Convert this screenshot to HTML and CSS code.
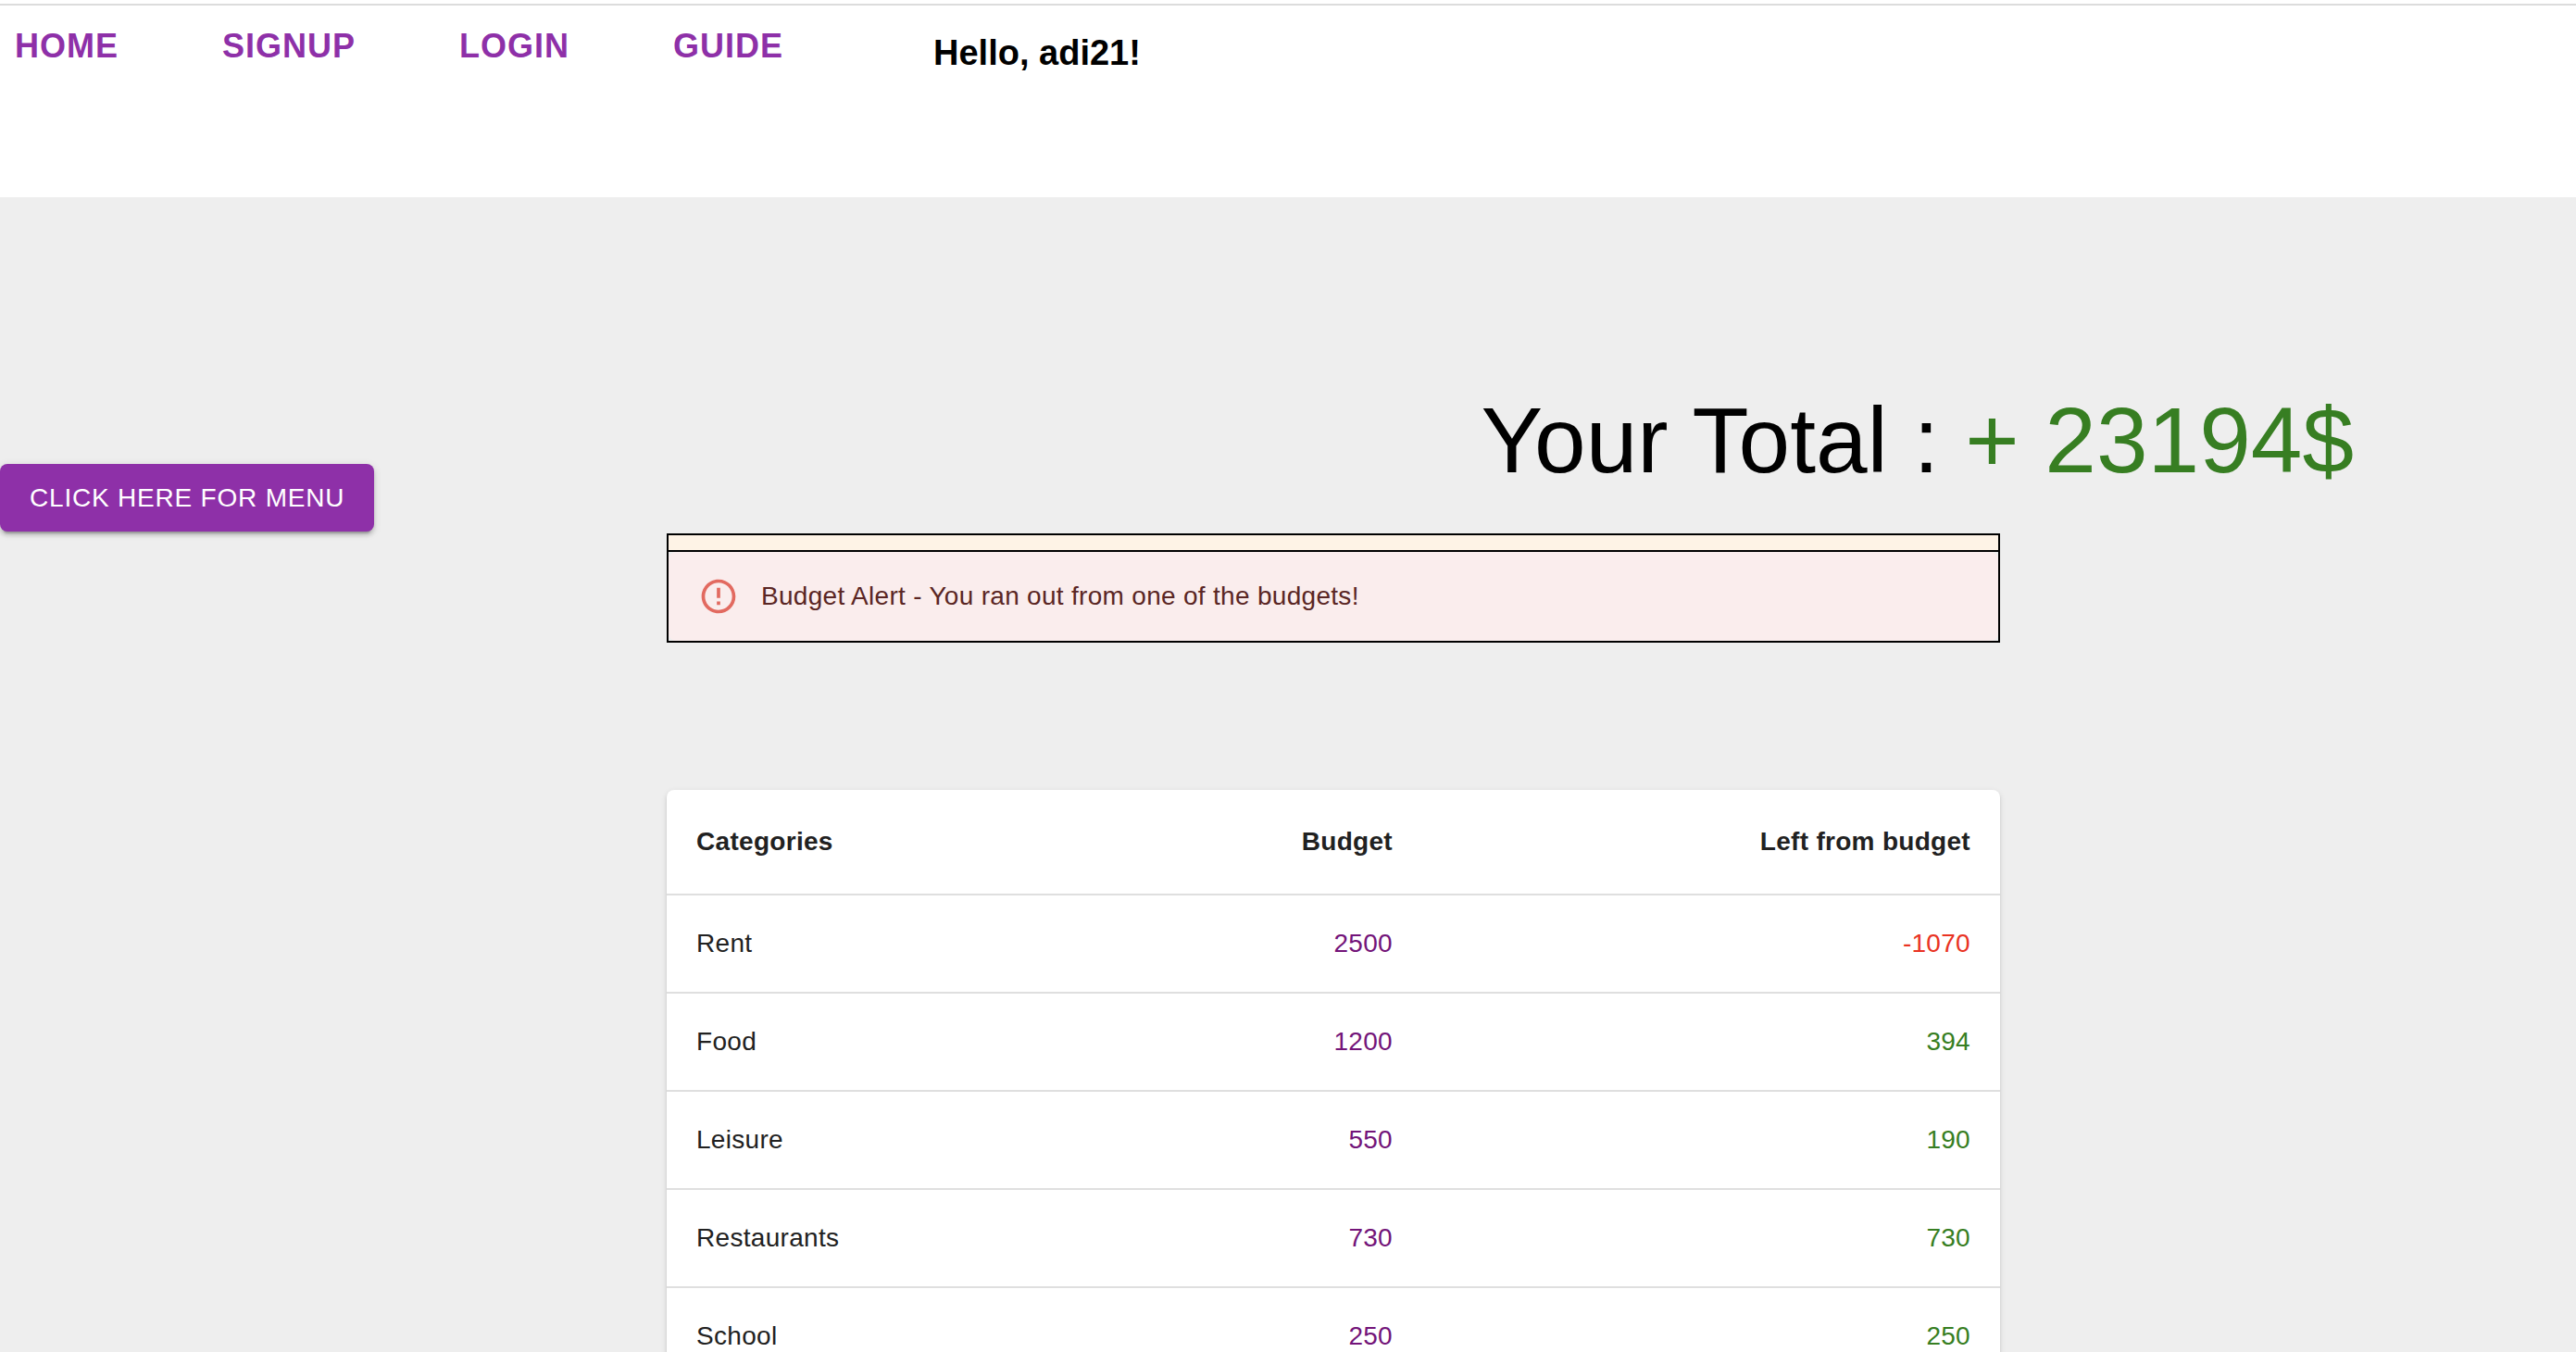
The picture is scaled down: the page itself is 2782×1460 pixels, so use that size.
FILE: index.html
```html
<!DOCTYPE html>
<html lang="en">
<head>
<meta charset="utf-8">
<title>Budget overview</title>
<link rel="stylesheet" href="styles.css">
</head>
<body>
<header class="topbar">
  <nav class="nav">
    <a class="nav-link" href="#home">Home</a>
    <a class="nav-link" href="#signup">Signup</a>
    <a class="nav-link" href="#login">Login</a>
    <a class="nav-link" href="#guide">Guide</a>
  </nav>
  <h3 class="greeting">Hello, adi21!</h3>
</header>
<main class="dashboard">
  <button class="menu-button" type="button">Click here for menu</button>
  <h1 class="total">Your Total : <span class="positive">+ 23194$</span></h1>
  <section class="alerts">
    <div class="alert-warning"></div>
    <div class="alert-error" role="alert">
      <svg class="alert-icon" viewBox="0 0 24 24" aria-hidden="true"><path d="M11 15h2v2h-2zm0-8h2v6h-2zm.99-5C6.47 2 2 6.48 2 12s4.47 10 9.99 10C17.52 22 22 17.52 22 12S17.52 2 11.99 2zM12 20c-4.42 0-8-3.58-8-8s3.58-8 8-8 8 3.58 8 8-3.58 8-8 8z"/></svg>
      <span>Budget Alert - You ran out from one of the budgets!</span>
    </div>
  </section>
  <div class="card">
    <table class="budgets">
      <thead>
        <tr><th class="col-name" scope="col">Categories</th><th class="col-budget" scope="col">Budget</th><th class="col-left" scope="col">Left from budget</th></tr>
      </thead>
      <tbody>
        <tr><td>Rent</td><td class="budget">2500</td><td class="negative">-1070</td></tr>
        <tr><td>Food</td><td class="budget">1200</td><td class="positive">394</td></tr>
        <tr><td>Leisure</td><td class="budget">550</td><td class="positive">190</td></tr>
        <tr><td>Restaurants</td><td class="budget">730</td><td class="positive">730</td></tr>
        <tr><td>School</td><td class="budget">250</td><td class="positive">250</td></tr>
      </tbody>
    </table>
  </div>
</main>
</body>
</html>
```
FILE: styles.css
```css
* {
  box-sizing: border-box;
}

body {
  display: flex;
  flex-direction: column;
  height: 100vh;
  margin: 0;
  padding-top: 4px;
  overflow: hidden;
  background: #fff;
  color: #000;
  font-family: "Liberation Sans", Arial, sans-serif;
  font-size: 28px;
}

.topbar {
  display: flex;
  align-items: flex-start;
  flex: none;
  gap: 146px;
  padding-bottom: 131px;
  border-top: 2px solid #dcdcdc;
}

.nav {
  display: flex;
  gap: 80px;
  padding-top: 12px;
}

.nav-link {
  padding: 0 16px;
  color: #8e30a8;
  font-size: 36px;
  font-weight: 700;
  letter-spacing: 1px;
  line-height: 64px;
  text-decoration: none;
  text-transform: uppercase;
}

.greeting {
  margin: 0;
  padding-top: 29px;
  font-size: 38px;
  line-height: 44px;
}

.dashboard {
  display: grid;
  grid-template-columns: 720fr 1440fr 622fr;
  align-content: start;
  flex: 1 0 auto;
  padding-top: 202px;
  background: #eee;
}

.menu-button {
  grid-area: 1 / 1;
  align-self: end;
  justify-self: start;
  margin-bottom: 2px;
  padding: 12px 32px;
  border: 0;
  border-radius: 8px;
  background: #8e30a8;
  box-shadow: 0 6px 2px -4px rgba(0, 0, 0, 0.2), 0 4px 4px rgba(0, 0, 0, 0.14), 0 2px 10px rgba(0, 0, 0, 0.12);
  color: #fff;
  font: inherit;
  letter-spacing: 0.02857em;
  line-height: 49px;
  text-transform: uppercase;
}

.total {
  grid-area: 1 / 2 / 2 / 4;
  margin: 0;
  padding: 0 240px 41px 0;
  font-size: 100px;
  font-weight: 400;
  line-height: 120px;
  text-align: right;
}

.alerts {
  grid-area: 2 / 2;
  border: 2px solid #000;
}

.alert-warning {
  height: 18px;
  border-bottom: 2px solid #000;
  background: #fef3e6;
}

.alert-error {
  display: flex;
  align-items: center;
  gap: 24px;
  height: 96px;
  padding: 0 32px;
  border-radius: 8px;
  background: #faeded;
  color: #5a2624;
  letter-spacing: 0.01071em;
}

.alert-icon {
  width: 44px;
  height: 44px;
  fill: #e26a60;
}

.card {
  grid-area: 3 / 2;
  margin-top: 159px;
  overflow: hidden;
  border-radius: 8px;
  background: #fff;
  box-shadow: 0 4px 2px -2px rgba(0, 0, 0, 0.2), 0 2px 2px rgba(0, 0, 0, 0.14), 0 2px 6px rgba(0, 0, 0, 0.12);
}

.budgets {
  width: 100%;
  border-collapse: separate;
  border-spacing: 0;
  color: #212121;
  letter-spacing: 0.01071em;
  table-layout: fixed;
}

.budgets th,
.budgets td {
  padding: 32px;
  border-bottom: 2px solid #dfdfdf;
  line-height: 40px;
  text-align: right;
}

.budgets th {
  line-height: 48px;
}

.budgets th:first-child,
.budgets td:first-child {
  text-align: left;
}

.col-budget {
  width: 24%;
}

.col-left {
  width: 624px;
}

.budgets .budget {
  color: #731479;
}

.positive,
.budgets .positive {
  color: #377e22;
}

.budgets .negative {
  color: #e93323;
}
```
